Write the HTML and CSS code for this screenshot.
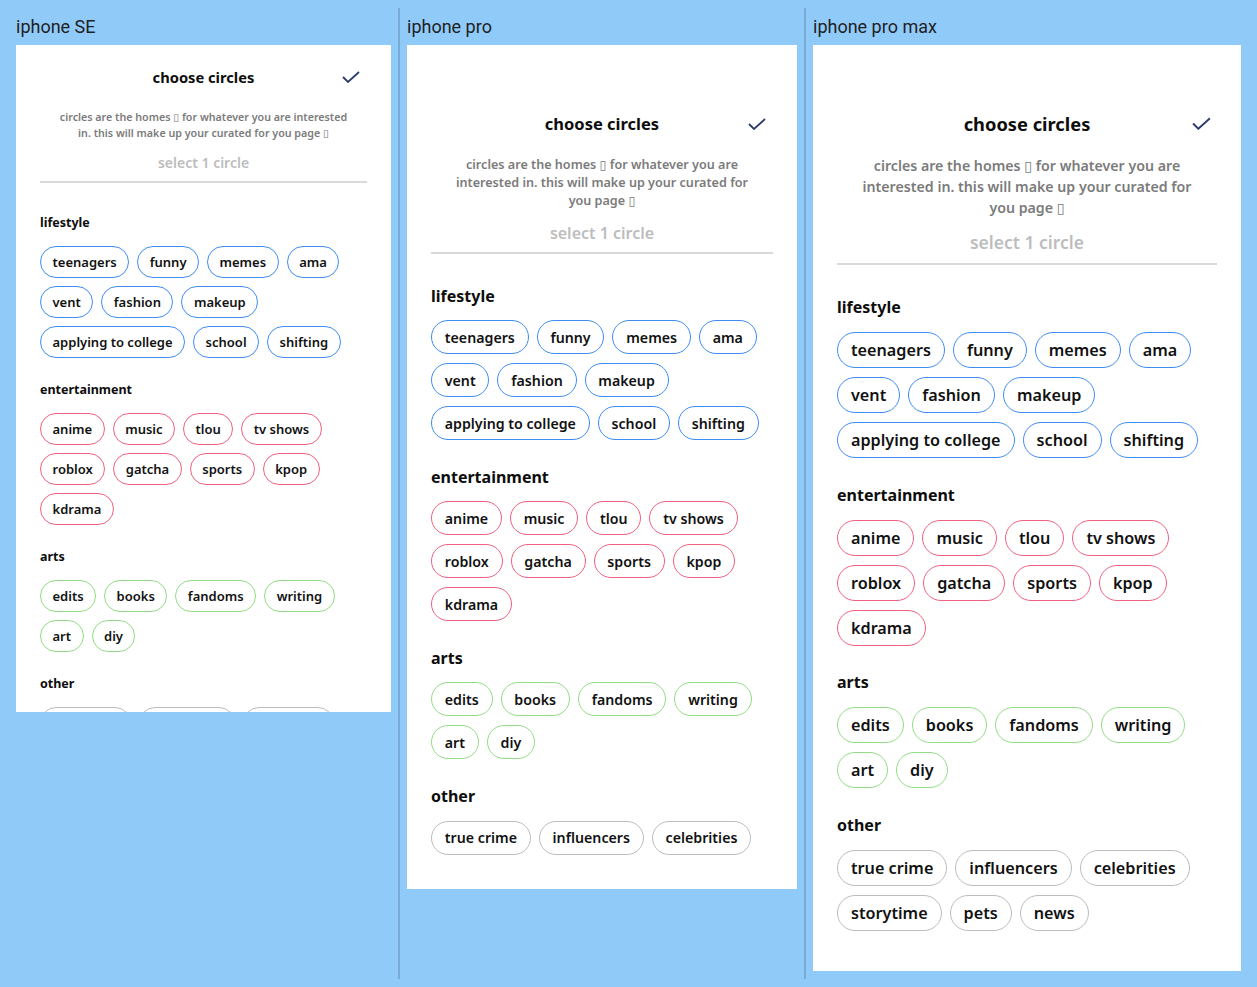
FILE: index.html
```html
<!DOCTYPE html>
<html lang="en">
<head>
<meta charset="utf-8">
<title>choose circles</title>
<link rel="stylesheet" href="styles.css">
</head>
<body>
<div class="page">

  <section class="device">
    <div class="device-label">iphone SE</div>
    <div class="frame frame-se">
      <div class="scroll">
        <div class="header">
          <span></span>
          <h1 class="title">choose circles</h1>
          <svg class="check" width="18" height="12" viewBox="0 0 18 12"><polyline points="1,6 6,11 17,1" fill="none" stroke="#2c3d6b" stroke-width="1.8"/></svg>
        </div>
        <p class="desc">circles are the homes <span class="tofu">▯</span> for whatever you are interested<br>in. this will make up your curated for you page <span class="tofu">▯</span></p>
        <p class="select">select 1 circle</p>
        <div class="rule"></div>
        <div class="section">
          <h2 class="sec-title">lifestyle</h2>
          <div class="chips blue"><span class="chip">teenagers</span><span class="chip">funny</span><span class="chip">memes</span><span class="chip">ama</span><span class="chip">vent</span><span class="chip">fashion</span><span class="chip">makeup</span><span class="chip">applying to college</span><span class="chip">school</span><span class="chip">shifting</span></div>
        </div>
        <div class="section">
          <h2 class="sec-title">entertainment</h2>
          <div class="chips pink"><span class="chip">anime</span><span class="chip">music</span><span class="chip">tlou</span><span class="chip">tv shows</span><span class="chip">roblox</span><span class="chip">gatcha</span><span class="chip">sports</span><span class="chip">kpop</span><span class="chip">kdrama</span></div>
        </div>
        <div class="section">
          <h2 class="sec-title">arts</h2>
          <div class="chips green"><span class="chip">edits</span><span class="chip">books</span><span class="chip">fandoms</span><span class="chip">writing</span><span class="chip">art</span><span class="chip">diy</span></div>
        </div>
        <div class="section">
          <h2 class="sec-title">other</h2>
          <div class="chips gray"><span class="chip">true crime</span><span class="chip">influencers</span><span class="chip">celebrities</span></div>
        </div>
      </div>
    </div>
  </section>

  <div class="sep"></div>

  <section class="device">
    <div class="device-label">iphone pro</div>
    <div class="frame frame-pro">
      <div class="scroll">
        <div class="header">
          <span></span>
          <h1 class="title">choose circles</h1>
          <svg class="check" width="18" height="12" viewBox="0 0 18 12"><polyline points="1,6 6,11 17,1" fill="none" stroke="#2c3d6b" stroke-width="1.8"/></svg>
        </div>
        <p class="desc">circles are the homes <span class="tofu">▯</span> for whatever you are<br>interested in. this will make up your curated for<br>you page <span class="tofu">▯</span></p>
        <p class="select">select 1 circle</p>
        <div class="rule"></div>
        <div class="section">
          <h2 class="sec-title">lifestyle</h2>
          <div class="chips blue"><span class="chip">teenagers</span><span class="chip">funny</span><span class="chip">memes</span><span class="chip">ama</span><span class="chip">vent</span><span class="chip">fashion</span><span class="chip">makeup</span><span class="chip">applying to college</span><span class="chip">school</span><span class="chip">shifting</span></div>
        </div>
        <div class="section">
          <h2 class="sec-title">entertainment</h2>
          <div class="chips pink"><span class="chip">anime</span><span class="chip">music</span><span class="chip">tlou</span><span class="chip">tv shows</span><span class="chip">roblox</span><span class="chip">gatcha</span><span class="chip">sports</span><span class="chip">kpop</span><span class="chip">kdrama</span></div>
        </div>
        <div class="section">
          <h2 class="sec-title">arts</h2>
          <div class="chips green"><span class="chip">edits</span><span class="chip">books</span><span class="chip">fandoms</span><span class="chip">writing</span><span class="chip">art</span><span class="chip">diy</span></div>
        </div>
        <div class="section">
          <h2 class="sec-title">other</h2>
          <div class="chips gray"><span class="chip">true crime</span><span class="chip">influencers</span><span class="chip">celebrities</span></div>
        </div>
      </div>
    </div>
  </section>

  <div class="sep"></div>

  <section class="device">
    <div class="device-label">iphone pro max</div>
    <div class="frame frame-max">
      <div class="scroll">
        <div class="header">
          <span></span>
          <h1 class="title">choose circles</h1>
          <svg class="check" width="19" height="13" viewBox="0 0 18 12"><polyline points="1,6 6,11 17,1" fill="none" stroke="#2c3d6b" stroke-width="1.8"/></svg>
        </div>
        <p class="desc">circles are the homes <span class="tofu">▯</span> for whatever you are<br>interested in. this will make up your curated for<br>you page <span class="tofu">▯</span></p>
        <p class="select">select 1 circle</p>
        <div class="rule"></div>
        <div class="section">
          <h2 class="sec-title">lifestyle</h2>
          <div class="chips blue"><span class="chip">teenagers</span><span class="chip">funny</span><span class="chip">memes</span><span class="chip">ama</span><span class="chip">vent</span><span class="chip">fashion</span><span class="chip">makeup</span><span class="chip">applying to college</span><span class="chip">school</span><span class="chip">shifting</span></div>
        </div>
        <div class="section">
          <h2 class="sec-title">entertainment</h2>
          <div class="chips pink"><span class="chip">anime</span><span class="chip">music</span><span class="chip">tlou</span><span class="chip">tv shows</span><span class="chip">roblox</span><span class="chip">gatcha</span><span class="chip">sports</span><span class="chip">kpop</span><span class="chip">kdrama</span></div>
        </div>
        <div class="section">
          <h2 class="sec-title">arts</h2>
          <div class="chips green"><span class="chip">edits</span><span class="chip">books</span><span class="chip">fandoms</span><span class="chip">writing</span><span class="chip">art</span><span class="chip">diy</span></div>
        </div>
        <div class="section">
          <h2 class="sec-title">other</h2>
          <div class="chips gray"><span class="chip">true crime</span><span class="chip">influencers</span><span class="chip">celebrities</span><span class="chip">storytime</span><span class="chip">pets</span><span class="chip">news</span></div>
        </div>
      </div>
    </div>
  </section>

</div>
</body>
</html>
```

FILE: styles.css
```css
* { box-sizing: border-box; }

body {
  margin: 0;
  background: #90caf9;
  font-family: "Noto Sans", "DejaVu Sans", sans-serif;
  color: #111;
}

.page {
  display: flex;
  align-items: stretch;
  gap: 7px;
  padding: 8px 16px 0;
}

.sep {
  flex: none;
  width: 2px;
  background: #7aaad6;
}

.device {
  display: flex;
  flex-direction: column;
  padding-bottom: 8px;
}

.device-label {
  height: 37px;
  font-family: Roboto, "Liberation Sans", sans-serif;
  font-size: 18px;
  line-height: 37px;
  color: #1f1f1f;
}

.frame {
  background: #fff;
  display: flex;
  flex-direction: column;
  overflow: hidden;
}

.frame-se {
  width: 375px;
  height: 667px;
  --pt: 20px;
  --title-fs: 14.7px;
  --desc-fs: 10.7px;
  --desc-lh: 16px;
  --desc-mt: 19.5px;
  --sel-fs: 14px;
  --sel-lh: 20px;
  --sel-mt: 12px;
  --rule-mt: 8px;
  --sec-fs: 12.5px;
  --sec-lh: 20px;
  --sec-first: 30px;
  --sec-mb: 13px;
  --sec-mt: 22px;
  --chip-fs: 13px;
  --chip-h: 32px;
  --chip-px: 11.5px;
  --row-gap: 8px;
  --check-mr: 7px;
}

.frame-pro {
  width: 390px;
  height: 844px;
  padding-bottom: 34px;
  --pt: 67px;
  --title-fs: 16.5px;
  --desc-fs: 12.6px;
  --desc-lh: 18px;
  --desc-mt: 19.5px;
  --sel-fs: 16px;
  --sel-lh: 22px;
  --sel-mt: 12px;
  --rule-mt: 8px;
  --sec-fs: 16px;
  --sec-lh: 22px;
  --sec-first: 31px;
  --sec-mb: 13.5px;
  --sec-mt: 25.7px;
  --chip-fs: 14.2px;
  --chip-h: 34px;
  --chip-px: 12.8px;
  --row-gap: 9px;
  --check-mr: 7px;
}

.frame-max {
  width: 428px;
  height: 926px;
  padding-bottom: 34px;
  --pt: 66.5px;
  --title-fs: 18.3px;
  --desc-fs: 14.2px;
  --desc-lh: 21px;
  --desc-mt: 19.5px;
  --sel-fs: 17.5px;
  --sel-lh: 24px;
  --sel-mt: 12px;
  --rule-mt: 9px;
  --sec-fs: 16px;
  --sec-lh: 22px;
  --sec-first: 31px;
  --sec-mb: 14px;
  --sec-mt: 25.7px;
  --chip-fs: 16.2px;
  --chip-h: 36px;
  --chip-px: 13px;
  --row-gap: 9px;
  --check-mr: 6px;
}

.scroll {
  flex: 1;
  min-height: 0;
  overflow: hidden;
  padding: var(--pt) 24px 0;
}

.header {
  display: grid;
  grid-template-columns: 1fr auto 1fr;
  align-items: center;
  height: 24px;
}

.title {
  margin: 0;
  font-size: var(--title-fs);
  font-weight: 700;
  line-height: 24px;
  color: #0d0d0d;
}

.check {
  justify-self: end;
  margin-right: var(--check-mr);
  display: block;
}

.desc {
  margin: var(--desc-mt) 0 0;
  font-size: var(--desc-fs);
  line-height: var(--desc-lh);
  font-weight: 600;
  color: #7b7b7b;
  text-align: center;
  white-space: nowrap;
}

.tofu {
  font-family: "DejaVu Sans", sans-serif;
  font-weight: 400;
  line-height: 0;
}

.select {
  margin: var(--sel-mt) 0 0;
  font-size: var(--sel-fs);
  line-height: var(--sel-lh);
  font-weight: 600;
  color: #bdbdbd;
  text-align: center;
}

.rule {
  margin-top: var(--rule-mt);
  height: 2px;
  background: #d9d9d9;
}

.section { margin-top: var(--sec-mt); }
.rule + .section { margin-top: var(--sec-first); }

.sec-title {
  margin: 0 0 var(--sec-mb);
  font-size: var(--sec-fs);
  line-height: var(--sec-lh);
  font-weight: 700;
  color: #0d0d0d;
}

.chips {
  display: flex;
  flex-wrap: wrap;
  column-gap: 8px;
  row-gap: var(--row-gap);
}

.chip {
  display: inline-flex;
  align-items: center;
  height: var(--chip-h);
  padding: 0 var(--chip-px);
  border: 1.5px solid #bdbdbd;
  border-radius: 999px;
  font-size: var(--chip-fs);
  font-weight: 600;
  color: #111;
  white-space: nowrap;
}

.blue .chip { border-color: #3f8cf4; }
.pink .chip { border-color: #f0607f; }
.green .chip { border-color: #93dc86; }
.gray .chip { border-color: #bcbcbc; }
```
